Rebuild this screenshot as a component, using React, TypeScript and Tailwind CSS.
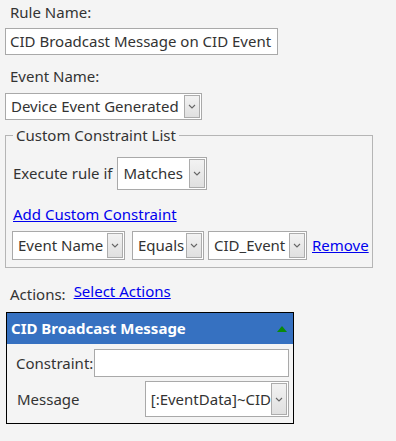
import React from "react";

const font = { fontFamily: '"Segoe UI", "Noto Sans", "Open Sans", sans-serif' };

const Chevron = () => (
  <svg width="8" height="5" viewBox="0 0 8 5" fill="none">
    <path d="M1 1 L4 4 L7 1" stroke="#666" strokeWidth="1.1" />
  </svg>
);

const FakeSelect = ({
  value,
  className,
}: {
  value: string;
  className: string;
}) => (
  <div
    className={`flex items-stretch border border-[#a9a9a9] bg-white p-[1px] ${className}`}
  >
    <div className="flex-1 overflow-hidden whitespace-nowrap pl-[4px] flex items-center">
      {value}
    </div>
    <div className="w-[16px] shrink-0 border border-[#acacac] bg-gradient-to-b from-[#f2f2f2] to-[#e0e0e0] flex items-center justify-center">
      <Chevron />
    </div>
  </div>
);

const App = () => {
  return (
    <div
      className="w-[396px] h-[441px] bg-[#f4f4f4] text-[#333] text-[15px] pl-[5px] pt-[2px] overflow-hidden"
      style={font}
    >
      <div className="ml-[5px] h-[20px] leading-[20px]">Rule Name:</div>
      <div className="mt-[6px] h-[27px] w-[273px] border border-[#a9a9a9] bg-white pl-[4px] leading-[25px] whitespace-nowrap overflow-hidden">
        CID Broadcast Message on CID Event
      </div>

      <div className="mt-[11px] ml-[5px] h-[20px] leading-[20px]">Event Name:</div>
      <FakeSelect value="Device Event Generated" className="mt-[7px] h-[27px] w-[197px]" />

      <fieldset className="mt-[5px] w-[368px] min-w-0 h-[143px] border border-[#b5b5b5] px-[7px]">
        <legend className="px-[3px] leading-[20px]">Custom Constraint List</legend>
        <div className="flex items-center mt-[12px] gap-[5px]">
          <span>Execute rule if</span>
          <FakeSelect value="Matches" className="h-[33px] w-[90px]" />
        </div>
        <div className="mt-[14px] h-[20px] leading-[20px]">
          <a href="#" className="text-[#0000ee] underline">
            Add Custom Constraint
          </a>
        </div>
        <div className="mt-[7px] -ml-[1px] flex items-center whitespace-nowrap">
          <FakeSelect value="Event Name" className="h-[29px] w-[113px] shrink-0" />
          <FakeSelect value="Equals" className="ml-[7px] h-[29px] w-[72px] shrink-0" />
          <FakeSelect value="CID_Event" className="ml-[4px] h-[29px] w-[99px] shrink-0" />
          <a href="#" className="ml-[5px] text-[#0000ee] underline">
            Remove
          </a>
        </div>
      </fieldset>

      <div className="mt-[12px] ml-[5px] flex items-start gap-[8px] h-[22px]">
        <span className="mt-[3px]">Actions:</span>
        <a href="#" className="text-[#0000ee] underline">
          Select Actions
        </a>
      </div>

      <div className="mt-[10px] ml-[1px] w-[288px] border border-black">
        <div className="h-[31px] bg-[#3671c1] flex items-center justify-between pl-[4px] pr-[6px]">
          <span className="text-white font-bold">CID Broadcast Message</span>
          <svg width="10" height="6" viewBox="0 0 10 6">
            <polygon points="0,6 5,0 10,6" fill="#0a8a0a" />
          </svg>
        </div>
        <div className="px-[4px] pt-[5px] pb-[6px]">
          <div className="flex items-center gap-[1px]">
            <span className="ml-[5px]">Constraint:</span>
            <div className="h-[28px] flex-1 border border-[#a9a9a9] bg-white" />
          </div>
          <div className="mt-[4px] flex items-center">
            <span className="ml-[6px] w-[128px]">Message</span>
            <FakeSelect value="[:EventData]~CID" className="h-[36px] flex-1" />
          </div>
        </div>
      </div>
    </div>
  );
};

export default App;
